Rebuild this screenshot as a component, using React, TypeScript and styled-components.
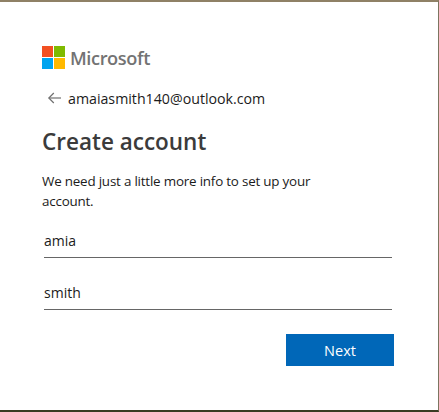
import React from 'react'
import styled, { createGlobalStyle } from 'styled-components'

const GlobalStyle = createGlobalStyle`
    html, body {
        margin: 0;
        padding: 0;
        background: #fff;
    }
    * {
        box-sizing: border-box;
    }
`

const Frame = styled.div`
    width: 439px;
    height: 412px;
    background: #fff;
    border-top: 2px solid #8f8166;
    border-right: 1px solid #7c7560;
    border-bottom: 2px solid #3a3c22;
    padding: 44px 45px 0 42px;
    font-family: "Open Sans", "Noto Sans", sans-serif;
    color: #1b1b1b;
    display: flex;
    flex-direction: column;
`

const Brand = styled.div`
    display: flex;
    align-items: center;
    gap: 5px;
    height: 23px;
`

const BrandName = styled.span`
    font-size: 18.2px;
    font-weight: 600;
    letter-spacing: -0.4px;
    color: #737373;
`

const Identity = styled.div`
    display: flex;
    align-items: center;
    gap: 7px;
    margin-top: 19px;
    padding-left: 6px;
    height: 20px;
    font-size: 14.2px;
`

const Heading = styled.h1`
    margin: 19px 0 0;
    font-size: 22.5px;
    line-height: 30px;
    font-weight: 600;
    color: #3b3b3b;
`

const Description = styled.p`
    margin: 14px 0 0;
    max-width: 300px;
    font-size: 13.4px;
    letter-spacing: -0.2px;
    line-height: 20px;
`

const Field = styled.input<{ $top: number }>`
    display: block;
    width: 348px;
    height: 33px;
    margin: ${(props) => props.$top}px 0 0 2px;
    padding: 0 0 2px;
    border: 0;
    border-bottom: 1px solid #666;
    outline: none;
    background: transparent;
    font-family: inherit;
    font-size: 14px;
    color: #1b1b1b;
`

const Actions = styled.div`
    display: flex;
    justify-content: flex-end;
    margin-top: 24px;
    margin-right: -1px;
`

const NextButton = styled.button`
    width: 108px;
    height: 32px;
    border: 0;
    padding: 0;
    background: #0067b8;
    color: #fff;
    font-family: inherit;
    font-size: 14.5px;
`

const MicrosoftLogo = () => (
    <svg width="23" height="23" viewBox="0 0 23 23">
        <rect x="0" y="0" width="11" height="11" fill="#f25022" />
        <rect x="12" y="0" width="11" height="11" fill="#7fba00" />
        <rect x="0" y="12" width="11" height="11" fill="#00a4ef" />
        <rect x="12" y="12" width="11" height="11" fill="#ffb900" />
    </svg>
)

const BackArrow = () => (
    <svg width="13" height="12" viewBox="0 0 13 12" fill="none" stroke="#707070" strokeWidth="1.2">
        <path d="M0.8 6H13" />
        <path d="M5.8 1L0.8 6L5.8 11" />
    </svg>
)

export default function App() {
    return (
        <Frame>
            <GlobalStyle />
            <Brand>
                <MicrosoftLogo />
                <BrandName>Microsoft</BrandName>
            </Brand>
            <Identity>
                <BackArrow />
                <span>amaiasmith140@outlook.com</span>
            </Identity>
            <Heading>Create account</Heading>
            <Description>We need just a little more info to set up your account.</Description>
            <Field $top={14} defaultValue="amia" />
            <Field $top={19} defaultValue="smith" />
            <Actions>
                <NextButton>Next</NextButton>
            </Actions>
        </Frame>
    )
}
